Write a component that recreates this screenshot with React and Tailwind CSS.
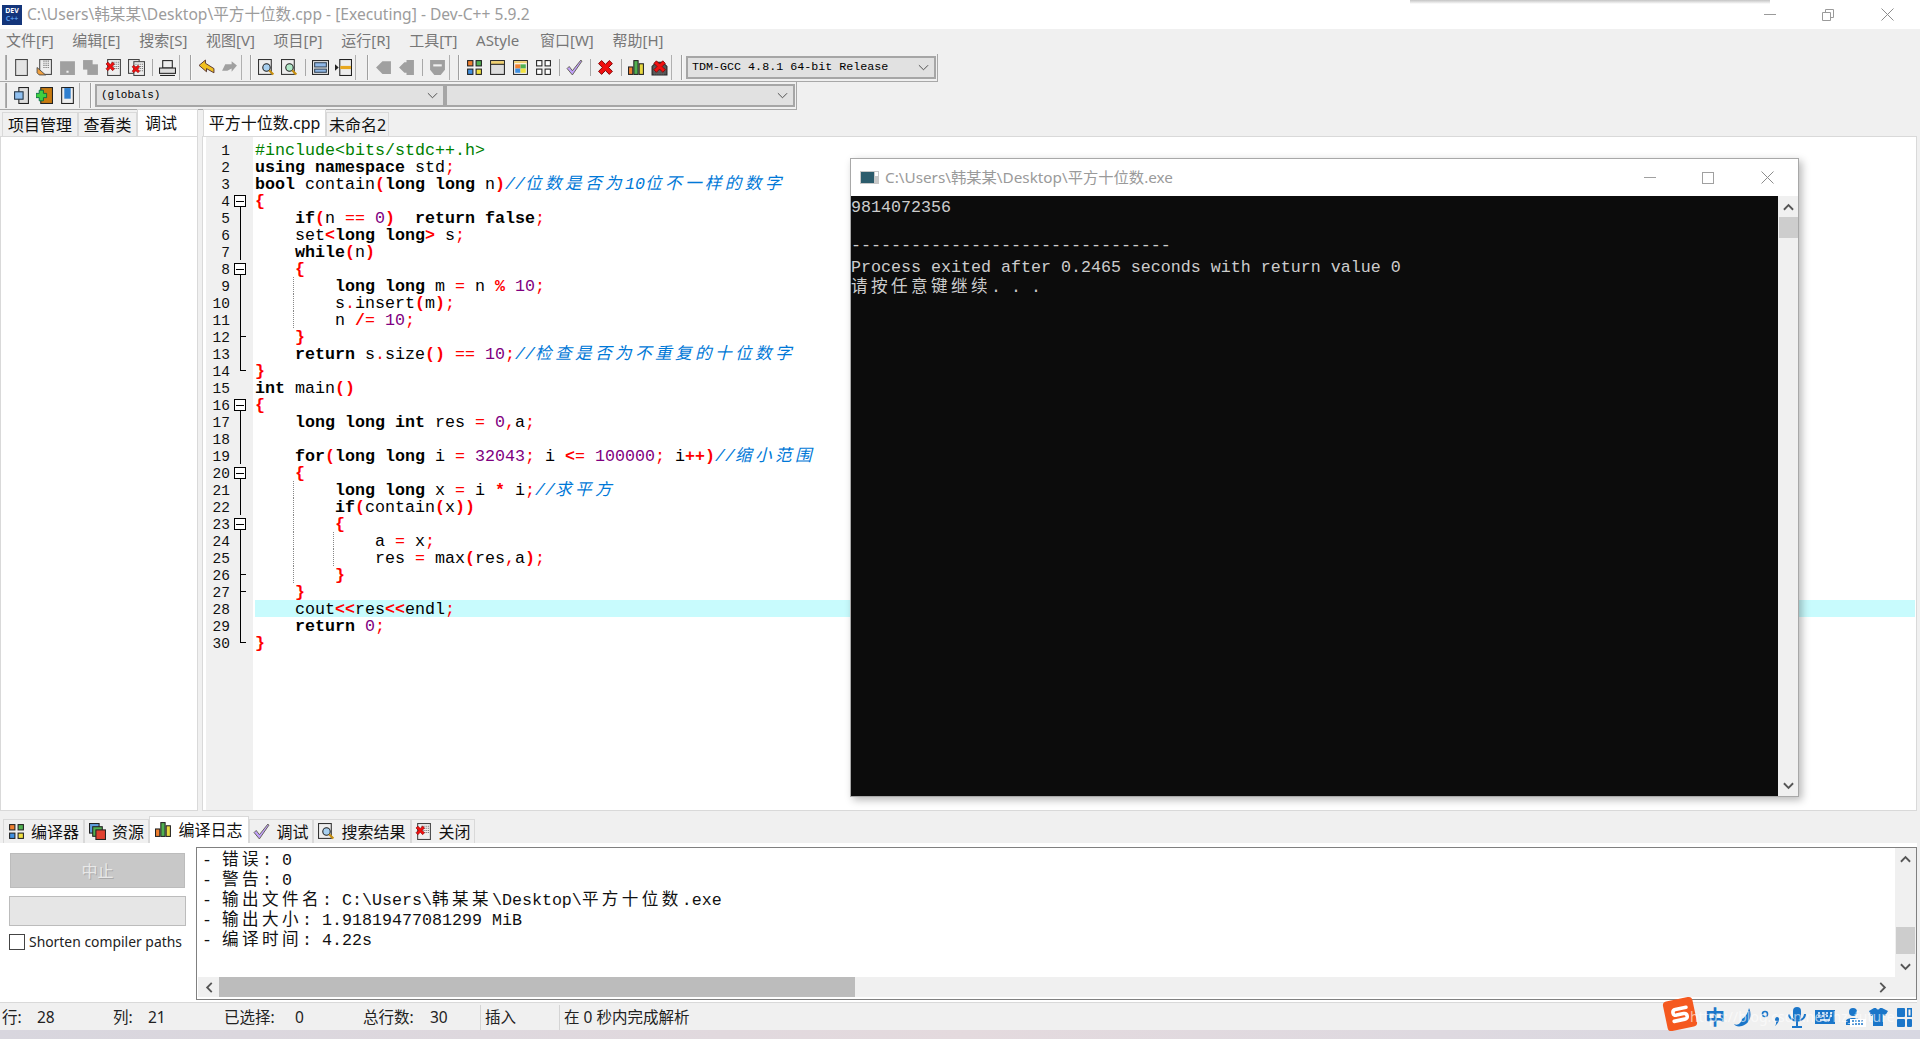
import React from 'react';

const mono = "[font-family:'Liberation_Mono','Noto_Sans_CJK_SC',monospace]";
const ui = "[font-family:'Noto_Sans','Noto_Sans_CJK_SC',sans-serif]";

// the source shown in the editor
const code = [
  '#include<bits/stdc++.h>',
  'using namespace std;',
  'bool contain(long long n)//位数是否为10位不一样的数字',
  '{',
  '    if(n == 0)  return false;',
  '    set<long long> s;',
  '    while(n)',
  '    {',
  '        long long m = n % 10;',
  '        s.insert(m);',
  '        n /= 10;',
  '    }',
  '    return s.size() == 10;//检查是否为不重复的十位数字',
  '}',
  'int main()',
  '{',
  '    long long int res = 0,a;',
  '',
  '    for(long long i = 32043; i <= 100000; i++)//缩小范围',
  '    {',
  '        long long x = i * i;//求平方',
  '        if(contain(x))',
  '        {',
  '            a = x;',
  '            res = max(res,a);',
  '        }',
  '    }',
  '    cout<<res<<endl;',
  '    return 0;',
  '}',
];

const folds = {
  4: 'box', 5: 'line', 6: 'line', 7: 'line', 8: 'box', 9: 'line', 10: 'line', 11: 'line', 12: 'tick', 13: 'line', 14: 'end',
  16: 'box', 17: 'line', 18: 'line', 19: 'line', 20: 'box', 21: 'line', 22: 'line', 23: 'box', 24: 'line', 25: 'line', 26: 'tick', 27: 'tick', 28: 'line', 29: 'line', 30: 'end',
};

const guides = { 9: [38], 10: [38], 11: [38], 21: [38], 22: [38], 23: [38], 24: [38, 78], 25: [38, 78], 26: [38] };

// wide glyphs take two cells of the mono grid
const mix = (str) =>
  str.split(/([\u4e00-\u9fff]+)/).map((s, i) =>
    i % 2 ? <span key={i} className="text-[16.6px] tracking-[3.4px]">{s}</span> : s
  );

const tokenize = (line) => {
  const re = /(\/\/.*$)|(#include.*$)|(\b(?:using|namespace|bool|long|int|if|return|false|while|for)\b)|(\b\d+\b)|((?:[(){}<>%*+]|\/(?!\/))+)|([;=.,]+)/g;
  const out = [];
  let last = 0;
  let m;
  while ((m = re.exec(line))) {
    if (m.index > last) out.push(<span key={last}>{line.slice(last, m.index)}</span>);
    const k = m.index;
    if (m[1]) out.push(<span key={k} className="italic text-[#0078d7]">{mix(m[1])}</span>);
    else if (m[2]) out.push(<span key={k} className="text-[#008000]">{m[2]}</span>);
    else if (m[3]) out.push(<span key={k} className="font-bold">{m[3]}</span>);
    else if (m[4]) out.push(<span key={k} className="text-[#800080]">{m[4]}</span>);
    else if (m[5]) out.push(<span key={k} className="font-bold text-[#ff0000]">{m[5]}</span>);
    else out.push(<span key={k} className="text-[#ff0000]">{m[6]}</span>);
    last = re.lastIndex;
  }
  if (last < line.length) out.push(<span key={last}>{line.slice(last)}</span>);
  return out;
};

const Fold = ({ type }) => (
  <div className="relative w-[13px] h-[17px]">
    {type === 'box' && (
      <>
        <div className="absolute left-[0px] top-[3px] w-[12px] h-[12px] border border-black bg-white flex items-center justify-center z-10">
          <div className="w-[8px] h-px bg-black" />
        </div>
        <div className="absolute left-[6px] top-[14px] w-px h-[3px] bg-black" />
      </>
    )}
    {type === 'line' && <div className="absolute left-[6px] top-0 w-px h-[17px] bg-black" />}
    {type === 'tick' && (
      <>
        <div className="absolute left-[6px] top-0 w-px h-[17px] bg-black" />
        <div className="absolute left-[6px] top-[8px] w-[6px] h-px bg-black" />
      </>
    )}
    {type === 'end' && (
      <>
        <div className="absolute left-[6px] top-0 w-px h-[9px] bg-black" />
        <div className="absolute left-[6px] top-[8px] w-[6px] h-px bg-black" />
      </>
    )}
  </div>
);

const Dots = ({ x, y, w }) => (
  <g stroke="#666" strokeWidth="1" strokeDasharray="1 1">
    <line x1={x} x2={x + w} y1={y} y2={y} />
    <line x1={x} x2={x + w} y1={y + 2} y2={y + 2} />
    <line x1={x} x2={x + w} y1={y + 4} y2={y + 4} />
    <line x1={x} x2={x + w} y1={y + 6} y2={y + 6} />
  </g>
);

const RedX = ({ x = 0, y = 0, s = 1 }) => (
  <g transform={`translate(${x} ${y}) scale(${s})`}>
    <path d="M1 3 3 1 5.500 3.500 8 1 10 3 7.500 5.500 10 8 8 10 5.500 7.500 3 10 1 8 3.500 5.500Z" fill="#f01010" stroke="#7a0000" strokeWidth=".6" />
  </g>
);

const Lens = ({ color }) => (
  <g>
    <circle cx="8" cy="8" r="3.500" fill={color} stroke="#222" strokeWidth="1" />
    <path d="M10.500 10.500 14.500 14.500" stroke="#c89010" strokeWidth="2" />
  </g>
);

const icons = {
  new: <rect x="2.500" y="0.500" width="11" height="15" fill="#e4e4e4" stroke="#444" />,
  open: (
    <>
      <rect x="3.500" y="0.500" width="11" height="14" fill="#eee" stroke="#444" />
      <Dots x={7} y={2} w={6} />
      <path d="M1 8 9 15H3L1 13Z" fill="#f0a040" stroke="#444" strokeWidth=".8" />
    </>
  ),
  save: <path d="M1 2H15V15H1Z M7 11H9V13H7Z" fill="#a0a0a0" fillRule="evenodd" />,
  saveAll: (
    <>
      <rect x="1" y="1" width="9" height="9" fill="#a0a0a0" />
      <rect x="5" y="5" width="10" height="10" fill="#a0a0a0" />
    </>
  ),
  close: (
    <>
      <rect x="2.500" y="0.500" width="12" height="15" fill="#eee" stroke="#444" />
      <Dots x={6} y={3} w={7} />
      <RedX x={0} y={2} s={0.9} />
    </>
  ),
  closeAll: (
    <>
      <rect x="0.500" y="0.500" width="10" height="13" fill="#eee" stroke="#444" />
      <rect x="5.500" y="2.500" width="10" height="13" fill="#eee" stroke="#444" />
      <Dots x={7} y={5} w={7} />
      <RedX x={3} y={5} s={0.8} />
    </>
  ),
  print: (
    <>
      <rect x="3.500" y="1.500" width="9" height="7" fill="#eee" stroke="#222" />
      <rect x="0.500" y="8.500" width="15" height="5" fill="#ddd" stroke="#222" />
      <path d="M1 15.500H15" stroke="#222" />
    </>
  ),
  undo: <path d="M1 6 7 1V4L15 9V13L8 9V12Z" fill="#f0c020" stroke="#533" strokeWidth=".9" />,
  redo: <path d="M15 6 10 2V5H4L1 11H6L10 9V12Z" fill="#a0a0a0" />,
  find: (
    <>
      <rect x="0.500" y="0.500" width="12" height="14" fill="#eee" stroke="#333" />
      <Lens color="#a8d0f0" />
    </>
  ),
  replace: (
    <>
      <rect x="0.500" y="0.500" width="12" height="14" fill="#eee" stroke="#333" />
      <Lens color="#b0e8c8" />
    </>
  ),
  panels: (
    <>
      <rect x="0.500" y="1.500" width="15" height="13" fill="#eee" stroke="#222" />
      <rect x="2.500" y="3.500" width="11" height="4" fill="#90b8e8" stroke="#345" />
      <rect x="2.500" y="9.500" width="11" height="3" fill="#90b8e8" stroke="#345" />
    </>
  ),
  goto: (
    <>
      <rect x="4.500" y="0.500" width="11" height="15" fill="#eee" stroke="#222" />
      <rect x="5" y="6.500" width="10" height="3" fill="#e8a820" />
      <path d="M0 5V11L3.500 8Z" fill="#222" />
    </>
  ),
  tabL: <path d="M1 8 7 2H15V14H7Z" fill="#a0a0a0" />,
  tabR: <path d="M1 8 6 3H8V1H15V15H8V13H6Z" fill="#a0a0a0" />,
  shield: (
    <>
      <path d="M1 1H15V10L11 15H5L1 10Z" fill="#a0a0a0" />
      <path d="M4 5H12V7H4Z" fill="#f0f0f0" />
    </>
  ),
  grid: (
    <>
      <rect x="1.500" y="1.500" width="5" height="5" fill="#f08030" stroke="#222" />
      <rect x="9.500" y="1.500" width="5" height="5" fill="#50b050" stroke="#222" />
      <rect x="1.500" y="9.500" width="5" height="5" fill="#4090e0" stroke="#222" />
      <rect x="9.500" y="9.500" width="5" height="5" fill="#f0e040" stroke="#222" />
    </>
  ),
  win: (
    <>
      <rect x="1.500" y="1.500" width="13" height="13" fill="#ddd" stroke="#222" />
      <rect x="2" y="2" width="12" height="3" fill="#f0d070" />
      <path d="M1.500 5H14.500" stroke="#222" />
    </>
  ),
  winColor: (
    <>
      <rect x="1.500" y="1.500" width="13" height="13" fill="#fff" stroke="#222" />
      <rect x="2" y="2" width="12" height="2" fill="#f0d070" />
      <rect x="3" y="5" width="5" height="4" fill="#f08030" />
      <rect x="8" y="5" width="5" height="4" fill="#50b050" />
      <rect x="3" y="9" width="5" height="4" fill="#4090e0" />
      <rect x="8" y="9" width="5" height="4" fill="#f0e040" />
    </>
  ),
  gridEmpty: (
    <>
      <rect x="1.500" y="1.500" width="5" height="5" fill="#fff" stroke="#222" />
      <rect x="9.500" y="1.500" width="5" height="5" fill="#fff" stroke="#222" />
      <rect x="1.500" y="9.500" width="5" height="5" fill="#fff" stroke="#222" />
      <rect x="9.500" y="9.500" width="5" height="5" fill="#fff" stroke="#222" />
    </>
  ),
  check: <path d="M1 9 3 7 6 11 14 1 15 2 6 15Z" fill="#c0a0f8" stroke="#554" strokeWidth=".8" />,
  stop: <RedX x={0} y={0} s={1.45} />,
  chart: (
    <>
      <rect x="0.500" y="7.500" width="4" height="7" fill="#f08030" stroke="#222" />
      <rect x="5.500" y="1.500" width="4" height="13" fill="#50b050" stroke="#222" />
      <rect x="10.500" y="4.500" width="4" height="10" fill="#e8d840" stroke="#222" />
    </>
  ),
  bug: (
    <>
      <path d="M1 15V7L5 3H11L15 7V15Z" fill="#555" stroke="#222" />
      <Dots x={3} y={8} w={10} />
      <RedX x={1.500} y={0.500} s={1.2} />
    </>
  ),
  pages: (
    <>
      <rect x="5.500" y="0.500" width="9" height="15" fill="#ddd" stroke="#222" />
      <rect x="1.500" y="4.500" width="8" height="7" fill="#90c0f0" stroke="#234" />
    </>
  ),
  addPage: (
    <>
      <rect x="4.500" y="0.500" width="11" height="15" fill="#c87a10" stroke="#222" />
      <path d="M3 3H7V6H10V10H7V13H3V10H0V6H3Z" fill="#40d040" stroke="#064" strokeWidth=".8" />
    </>
  ),
  book: (
    <>
      <rect x="2.500" y="0.500" width="11" height="15" fill="#eee" stroke="#222" />
      <rect x="5" y="1" width="6" height="10" fill="#3080d0" />
    </>
  ),
  res: (
    <>
      <rect x="0.500" y="0.500" width="9" height="9" fill="#60a0e0" stroke="#222" />
      <rect x="3.500" y="3.500" width="9" height="9" fill="#50b050" stroke="#222" />
      <rect x="6.500" y="6.500" width="9" height="9" fill="#e04030" stroke="#222" />
    </>
  ),
};

const Icon = ({ name }) => (
  <svg viewBox="0 0 16 16" className="w-[17px] h-[17px] shrink-0">{icons[name]}</svg>
);

const Btn = ({ name }) => (
  <div className="w-[23px] flex items-center justify-center"><Icon name={name} /></div>
);

const Sep = () => (
  <div className="w-[8px] flex justify-center items-center"><div className="w-px h-[17px] bg-[#a8a8a8]" /></div>
);

const Grip = ({ w }) => (
  <div className={`${w} flex items-stretch justify-between py-[1px] pr-[3px]`}>
    <div className="w-px bg-[#b0b0b0]" />
    <div className="w-[2px] bg-[#f8f8f8] border-l border-[#a0a0a0] border-r-0" />
  </div>
);

const Chevron = () => (
  <svg viewBox="0 0 12 7" className="w-[11px] h-[7px]">
    <path d="M1 1 6 6 11 1" fill="none" stroke="#444" strokeWidth="1" />
  </svg>
);

const Select = ({ className, text, size }) => (
  <div className={`${className} bg-[#e1e1e1] border-2 border-[#a6a6a6] flex items-center justify-between pl-[4px] pr-[5px]`}>
    <span className={`${mono} ${size} text-black whitespace-pre`}>{text}</span>
    <Chevron />
  </div>
);

const Tab = ({ active, children, className }) => (
  <div
    className={`${className} flex items-center justify-center gap-[6px] border-[#d9d9d9] text-[16px] whitespace-pre text-[#111] ${
      active ? 'bg-white border-l border-r border-t h-[27px] pb-[1px]' : 'bg-[#f0f0f0] border-l border-r border-t h-[24px]'
    }`}
  >
    {children}
  </div>
);

const Arrow = ({ dir }) => {
  const d = { up: 'M1 7 6 2 11 7', down: 'M1 1 6 6 11 1' }[dir];
  return (
    <svg viewBox="0 0 12 8" className="w-[11px] h-[8px]">
      <path d={d} fill="none" stroke="#555" strokeWidth="2" />
    </svg>
  );
};

const ArrowH = ({ dir }) => (
  <svg viewBox="0 0 8 12" className="w-[8px] h-[11px]">
    <path d={dir === 'left' ? 'M7 1 2 6 7 11' : 'M1 1 6 6 1 11'} fill="none" stroke="#555" strokeWidth="2" />
  </svg>
);

const CloseGlyph = () => (
  <svg viewBox="0 0 13 13" className="w-[13px] h-[13px]">
    <path d="M.5.5 12.500 12.500M12.500.5.5 12.500" stroke="#8c8c8c" strokeWidth="1" />
  </svg>
);

const Console = () => (
  <div className="absolute left-[850px] top-[158px] w-[949px] h-[639px] border border-[#a8a8a8] bg-white shadow-[3px_3px_8px_rgba(0,0,0,0.28)] flex flex-col z-20">
    <div className="h-[37px] flex items-center shrink-0">
      <svg viewBox="0 0 19 13" className="ml-[9px] w-[19px] h-[13px]">
        <rect width="19" height="13" fill="#c8c8c8" />
        <rect x="1" y="1" width="13" height="11" fill="#2c5c6c" />
        <rect x="15" y="1" width="3" height="4" fill="#fff" />
      </svg>
      <span className="ml-[6px] text-[15.3px] text-[#9a9a9a] whitespace-pre">C:\Users\韩某某\Desktop\平方十位数.exe</span>
      <div className="ml-auto flex items-center mr-[24px]">
        <div className="w-[12px] h-px bg-[#a0a0a0] mr-[46px]" />
        <div className="w-[12px] h-[12px] border border-[#a0a0a0] mr-[47px]" />
        <CloseGlyph />
      </div>
    </div>
    <div className="flex-1 flex min-h-0">
      <div className={`${mono} flex-1 pt-[2px] bg-[#0c0c0c] text-[#cccccc] text-[16.67px] leading-[20px] whitespace-pre`}>
        <div>9814072356</div>
        <div>&nbsp;</div>
        <div className="h-[20px] leading-[16px]">--------------------------------</div>
        <div>Process exited after 0.2465 seconds with return value 0</div>
        <div>{mix('请按任意键继续. . .')}</div>
      </div>
      <div className="w-[20px] bg-[#f0f0f0] flex flex-col items-center">
        <div className="h-[21px] flex items-center justify-center"><Arrow dir="up" /></div>
        <div className="w-[19px] h-[21px] bg-[#cdcdcd]" />
        <div className="flex-1" />
        <div className="h-[21px] flex items-center justify-center"><Arrow dir="down" /></div>
      </div>
    </div>
  </div>
);

const Editor = () => (
  <div className="flex-1 bg-white border border-[#d9d9d9] flex min-h-0 pl-[3px]">
    <div className="w-[47px] bg-[#f0f0f0] pt-[4px] flex flex-col">
      {code.map((_, i) => (
        <div key={i} className="h-[17px] flex">
          <div className={`${mono} w-[24px] text-right text-[14.5px] leading-[20px] text-[#111]`}>{i + 1}</div>
          <div className="ml-[4px]"><Fold type={folds[i + 1]} /></div>
        </div>
      ))}
    </div>
    <div className={`${mono} flex-1 pl-[2px] pt-[4px] pr-[1px] text-[16.67px] leading-[20px] text-black`}>
      {code.map((line, i) => (
        <div key={i} className={`relative h-[17px] whitespace-pre ${i === 27 ? 'bg-[#c8fbfd]' : ''}`}>
          {(guides[i + 1] || []).map((x) => (
            <div
              key={x}
              className={`absolute top-0 h-[17px] border-l border-dotted border-[#888] ${x === 38 ? 'left-[38px]' : 'left-[78px]'}`}
            />
          ))}
          {tokenize(line)}
        </div>
      ))}
    </div>
  </div>
);

const Tray = () => (
  <div className="absolute left-[1665px] top-[996px] w-[255px] h-[35px] flex items-end z-30">
    <div className="w-[30px] h-[30px] bg-[#f5591f] rounded-[4px] -rotate-12 flex items-center justify-center shrink-0 mb-[2px]">
      <svg viewBox="0 0 20 20" className="w-[24px] h-[24px]">
        <path d="M16 5.500H7Q4.500 5.500 4.500 8T7 10.300H13Q15.500 10.300 15.500 12.700T13 15H4" fill="none" stroke="#fff" strokeWidth="3" strokeLinecap="round" />
      </svg>
    </div>
    <span className="ml-[10px] w-[21px] h-[24px] mb-[1px] shrink-0 text-[20px] leading-[24px] font-bold text-[#1b76c9]">中</span>
    <svg viewBox="21 0 194 24" className="w-[194px] h-[24px] mb-[1px] shrink-0" fill="#1b76c9">
      <path d="M44 2C47 8 46 17 37 20 33 21 30 20 29 18 33 20 36 17 37 13 39 12 43 8 44 2Z" />
      <circle cx="60" cy="8" r="2.500" fill="none" stroke="#1b76c9" strokeWidth="1.600" />
      <path d="M72 11C75 11 75 16 70 20 72 17 71 15 70 14 70 12 71 11 72 11Z" />
      <g transform="translate(-2 0)">
        <rect x="90" y="1" width="8" height="13" rx="4" />
        <path d="M86 8C86 17 102 17 102 8M94 15V20M89 21H99" fill="none" stroke="#1b76c9" strokeWidth="2" />
      </g>
      <g transform="translate(-5 0)">
        <path d="M115 4H135V18H115Z" />
        <path d="M118 7H120M122 7H124M126 7H128M130 7H132M118 10H120M122 10H124M126 10H128M130 10H132M120 14H130" stroke="#fff" strokeWidth="1.500" />
      </g>
      <g transform="translate(-5 0)">
        <circle cx="153" cy="6" r="4" />
        <path d="M146 15C146 11 160 11 160 15V19H146Z" />
        <rect x="150" y="13" width="16" height="8" fill="#fff" />
        <path d="M152 15H164M152 18H164" stroke="#1b76c9" strokeWidth="1.500" strokeDasharray="2 1" />
      </g>
      <g transform="translate(-12 0)">
        <path d="M176 5 181 2H183Q185 5 187 2H189L195 5 192 10 190 9V20H180V9L178 10Z" />
      </g>
      <g transform="translate(-8 0)">
        <rect x="200" y="2" width="8" height="9" rx="1" />
        <rect x="200" y="13" width="8" height="8" rx="1" />
        <rect x="210" y="13" width="5" height="8" rx="1" />
        <rect x="210.750" y="2.750" width="3.500" height="7.500" fill="none" stroke="#1b76c9" strokeWidth="1.500" />
      </g>
    </svg>
  </div>
);

const App = () => (
  <div className={`${ui} relative w-[1920px] h-[1039px] overflow-hidden bg-[#f0f0f0] flex flex-col`}>
    {/* Title bar */}
    <div className="relative h-[29px] bg-white flex items-center shrink-0">
      <div className="ml-[2px] w-[20px] h-[20px] bg-[#14357a] flex flex-col items-center justify-center leading-none overflow-hidden">
        <span className="text-[7px] font-bold text-white leading-[8px]">DEV</span>
        <span className="text-[7px] font-bold text-[#5a9ae8] leading-[8px]">C++</span>
      </div>
      <span className="ml-[5px] text-[15.6px] text-[#9c9c9c] whitespace-pre">C:\Users\韩某某\Desktop\平方十位数.cpp - [Executing] - Dev-C++ 5.9.2</span>
      <div className="absolute left-[1410px] top-0 w-[360px] h-[4px] bg-gradient-to-b from-[#c4c4c4] to-white" />
      <div className="ml-auto flex items-center mr-[26px]">
        <div className="w-[12px] h-px bg-[#9a9a9a] mr-[46px]" />
        <svg viewBox="0 0 12 12" className="w-[12px] h-[12px] mr-[47px]">
          <path d="M.5 3.500H8.500V11.500H.5Z M3.500 3.500V.5H11.500V8.500H8.500" fill="none" stroke="#9a9a9a" />
        </svg>
        <CloseGlyph />
      </div>
    </div>

    {/* Menu */}
    <div className="h-[25px] flex items-center gap-[18.700px] pl-[6px] pb-[2px] text-[15px] text-[#777] shrink-0">
      {['文件[F]', '编辑[E]', '搜索[S]', '视图[V]', '项目[P]', '运行[R]', '工具[T]', 'AStyle', '窗口[W]', '帮助[H]'].map((m) => (
        <span key={m} className={m === 'AStyle' ? 'mr-[2px]' : ''}>{m}</span>
      ))}
    </div>

    {/* Toolbars */}
    <div className="h-[28px] w-[938px] border-b border-r border-[#a8a8a8] flex items-stretch pl-[5px] shrink-0">
      <Grip w="w-[5px]" />
      <div className="flex items-center">
        {['new', 'open', 'save', 'saveAll', 'close', 'closeAll'].map((n) => <Btn key={n} name={n} />)}
        <Sep />
        <Btn name="print" />
      </div>
      <Grip w="w-[16px]" />
      <div className="flex items-center">
        <Btn name="undo" />
        <Btn name="redo" />
      </div>
      <Grip w="w-[14px]" />
      <div className="flex items-center">
        <Btn name="find" />
        <Btn name="replace" />
        <Sep />
        <Btn name="panels" />
        <Btn name="goto" />
      </div>
      <Grip w="w-[17px]" />
      <div className="flex items-center">
        <Btn name="tabL" />
        <Btn name="tabR" />
        <Sep />
        <Btn name="shield" />
      </div>
      <Grip w="w-[14px]" />
      <div className="flex items-center">
        {['grid', 'win', 'winColor', 'gridEmpty'].map((n) => <Btn key={n} name={n} />)}
        <Sep />
        <Btn name="check" />
        <Sep />
        <Btn name="stop" />
        <Sep />
        <Btn name="chart" />
        <Btn name="bug" />
      </div>
      <Grip w="w-[15px]" />
      <Select className="w-[250px] h-[23px] mt-[2px]" text="TDM-GCC 4.8.1 64-bit Release" size="text-[11.700px]" />
    </div>
    <div className="h-[28px] w-[797px] border-b border-r border-[#a8a8a8] flex items-stretch pl-[5px] shrink-0">
      <Grip w="w-[5px]" />
      <div className="flex items-center">
        <Btn name="pages" />
        <Btn name="addPage" />
        <Btn name="book" />
      </div>
      <Grip w="w-[16px]" />
      <div className="flex">
        <Select className="w-[350px] h-[23px] mt-[2px]" text="(globals)" size="text-[11px]" />
        <Select className="w-[350px] h-[23px] mt-[2px]" text="" size="text-[11px]" />
      </div>
    </div>

    {/* Project panel + editor */}
    <div className="h-[701px] flex shrink-0 pr-[3px]">
      <div className="w-[198px] flex flex-col shrink-0">
        <div className="h-[26px] flex items-end pl-[2px]">
          <Tab className="w-[76px]">项目管理</Tab>
          <Tab className="w-[59px]">查看类</Tab>
          <Tab active className="w-[61px] !justify-start pl-[7px]">调试</Tab>
        </div>
        <div className="flex-1 bg-white border border-[#d9d9d9]" />
      </div>
      <div className="flex-1 flex flex-col ml-[4px] min-w-0">
        <div className="h-[26px] flex items-end pl-[1px]">
          <Tab active className="w-[123px]">平方十位数.cpp</Tab>
          <Tab className="w-[63px]">未命名2</Tab>
        </div>
        <Editor />
      </div>
    </div>

    {/* Bottom tabs */}
    <div className="h-[32px] flex items-end pl-[3px] shrink-0">
      <Tab className="w-[81px]"><Icon name="grid" />编译器</Tab>
      <Tab className="w-[65px]"><Icon name="res" />资源</Tab>
      <Tab active className="w-[100px]"><Icon name="chart" />编译日志</Tab>
      <Tab className="w-[64px]"><Icon name="check" />调试</Tab>
      <Tab className="w-[98px]"><Icon name="find" />搜索结果</Tab>
      <Tab className="w-[64px]"><Icon name="close" />关闭</Tab>
    </div>

    {/* Compile log */}
    <div className="h-[160px] bg-white flex mr-[3px] shrink-0 border-b border-[#d9d9d9]">
      <div className="w-[196px] shrink-0 pl-[9px] pt-[10px]">
        <div className="ml-[1px] w-[175px] h-[35px] bg-[#c8c8c8] border border-[#bcbcbc] flex items-center justify-center text-[16px] text-[#e8e8e8] [text-shadow:1px_1px_0_#aaa]">中止</div>
        <div className="mt-[8px] w-[177px] h-[30px] bg-[#e6e6e6] border border-[#bcbcbc]" />
        <div className="mt-[6px] flex items-center gap-[4px] text-[13.9px] text-[#222] whitespace-pre">
          <div className="w-[16px] h-[16px] border border-[#444] bg-white" />
          Shorten compiler paths
        </div>
      </div>
      <div className="flex-1 mt-[4px] mb-[2px] border border-[#808080] flex flex-col min-w-0">
        <div className="flex-1 flex min-h-0">
          <div className={`${mono} flex-1 pl-[5px] pt-[3px] text-[16.67px] leading-[20px] text-[#111] whitespace-pre`}>
            {['- 错误: 0', '- 警告: 0', '- 输出文件名: C:\\Users\\韩某某\\Desktop\\平方十位数.exe', '- 输出大小: 1.91819477081299 MiB', '- 编译时间: 4.22s'].map((l) => (
              <div key={l}>{mix(l)}</div>
            ))}
          </div>
          <div className="w-[21px] bg-[#f0f0f0] flex flex-col items-center shrink-0">
            <div className="h-[21px] flex items-center justify-center"><Arrow dir="up" /></div>
            <div className="flex-1 flex flex-col justify-end w-full pb-[2px]">
              <div className="h-[27px] mx-[1px] bg-[#cdcdcd]" />
            </div>
            <div className="h-[21px] flex items-center justify-center"><Arrow dir="down" /></div>
          </div>
        </div>
        <div className="h-[20px] mb-[2px] ml-[1px] bg-[#f0f0f0] flex items-stretch shrink-0">
          <div className="w-[21px] flex items-center justify-center"><ArrowH dir="left" /></div>
          <div className="w-[636px] bg-[#bcbcbc]" />
          <div className="flex-1 flex items-center justify-end pr-[29px]"><ArrowH dir="right" /></div>
        </div>
      </div>
    </div>

    {/* Status bar */}
    <div className="mt-[2px] h-[25px] flex items-center pl-[2px] text-[15.500px] text-[#222] whitespace-pre shrink-0">
      <span className="w-[35px]">行:</span>
      <span className="w-[76px]">28</span>
      <span className="w-[35px]">列:</span>
      <span className="w-[76px]">21</span>
      <span className="w-[71px]">已选择:</span>
      <span className="w-[68px]">0</span>
      <span className="w-[67px]">总行数:</span>
      <span className="w-[50px]">30</span>
      <span className="w-[79px] h-full flex items-center pl-[4px] border-l border-[#d4d4d4]">插入</span>
      <span className="h-full flex items-center pl-[4px] border-l border-[#d4d4d4]">在 0 秒内完成解析</span>
    </div>

    {/* Desktop strip under the window */}
    <div className="flex-1 bg-gradient-to-r from-[#d8d6de] via-[#e4dade] to-[#d8d8e2]" />

    <Console />
    <Tray />
    <div className="absolute left-[1690px] top-[1006px] text-[14px] text-white/60 whitespace-pre z-30">https://blog.csdn.net/hz_future</div>
  </div>
);

export default App;
